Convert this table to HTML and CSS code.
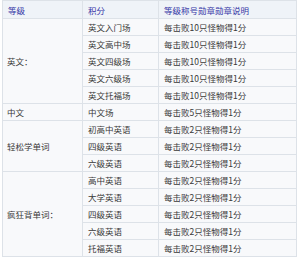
FILE: index.html
```html
<!DOCTYPE html>
<html lang="zh">
<head>
<meta charset="utf-8">
<link rel="stylesheet" href="styles.css">
</head>
<body>
<table class="grid">
  <colgroup><col class="c1"><col class="c2"><col class="c3"></colgroup>
  <thead>
    <tr><th>等级</th><th>积分</th><th>等级称号勋章勋章说明</th></tr>
  </thead>
  <tbody>
    <tr><td rowspan="5" class="grp">英文：</td><td>英文入门场</td><td>每击败10只怪物得1分</td></tr>
    <tr><td>英文高中场</td><td>每击败10只怪物得1分</td></tr>
    <tr><td>英文四级场</td><td>每击败10只怪物得1分</td></tr>
    <tr><td>英文六级场</td><td>每击败10只怪物得1分</td></tr>
    <tr><td>英文托福场</td><td>每击败10只怪物得1分</td></tr>
    <tr><td class="grp">中文</td><td>中文场</td><td>每击败5只怪物得1分</td></tr>
    <tr><td rowspan="3" class="grp">轻松学单词</td><td>初高中英语</td><td>每击败2只怪物得1分</td></tr>
    <tr><td>四级英语</td><td>每击败2只怪物得1分</td></tr>
    <tr><td>六级英语</td><td>每击败2只怪物得1分</td></tr>
    <tr><td rowspan="5" class="grp">疯狂背单词：</td><td>高中英语</td><td>每击败2只怪物得1分</td></tr>
    <tr><td>大学英语</td><td>每击败2只怪物得1分</td></tr>
    <tr><td>四级英语</td><td>每击败2只怪物得1分</td></tr>
    <tr><td>六级英语</td><td>每击败2只怪物得1分</td></tr>
    <tr><td>托福英语</td><td>每击败2只怪物得1分</td></tr>
  </tbody>
</table>
</body>
</html>
```
FILE: styles.css
```css
html, body {
  margin: 0;
  padding: 0;
  background: #ffffff;
}
body {
  padding: 0 3px 0 2px;
  font-family: "Noto Sans CJK SC", "Noto Sans", sans-serif;
  font-size: 8.5px;
  color: #383838;
}
.grid {
  border-collapse: collapse;
  width: 295px;
  table-layout: fixed;
  background: #f8f9fb;
  border: 1px solid #c9d6e6;
}
.c1 { width: 80px; }
.c2 { width: 76px; }
.grid th, .grid td {
  height: 16px;
  padding: 0 0 0 5px;
  border: 1px solid #dde2e8;
  text-align: left;
  vertical-align: middle;
  line-height: 16px;
  white-space: nowrap;
  overflow: hidden;
}
.grid th {
  height: 17px;
  font-weight: normal;
  color: #3434a6;
  background: #eff3f8;
}
.grid td.grp {
  padding-left: 4px;
}
```
